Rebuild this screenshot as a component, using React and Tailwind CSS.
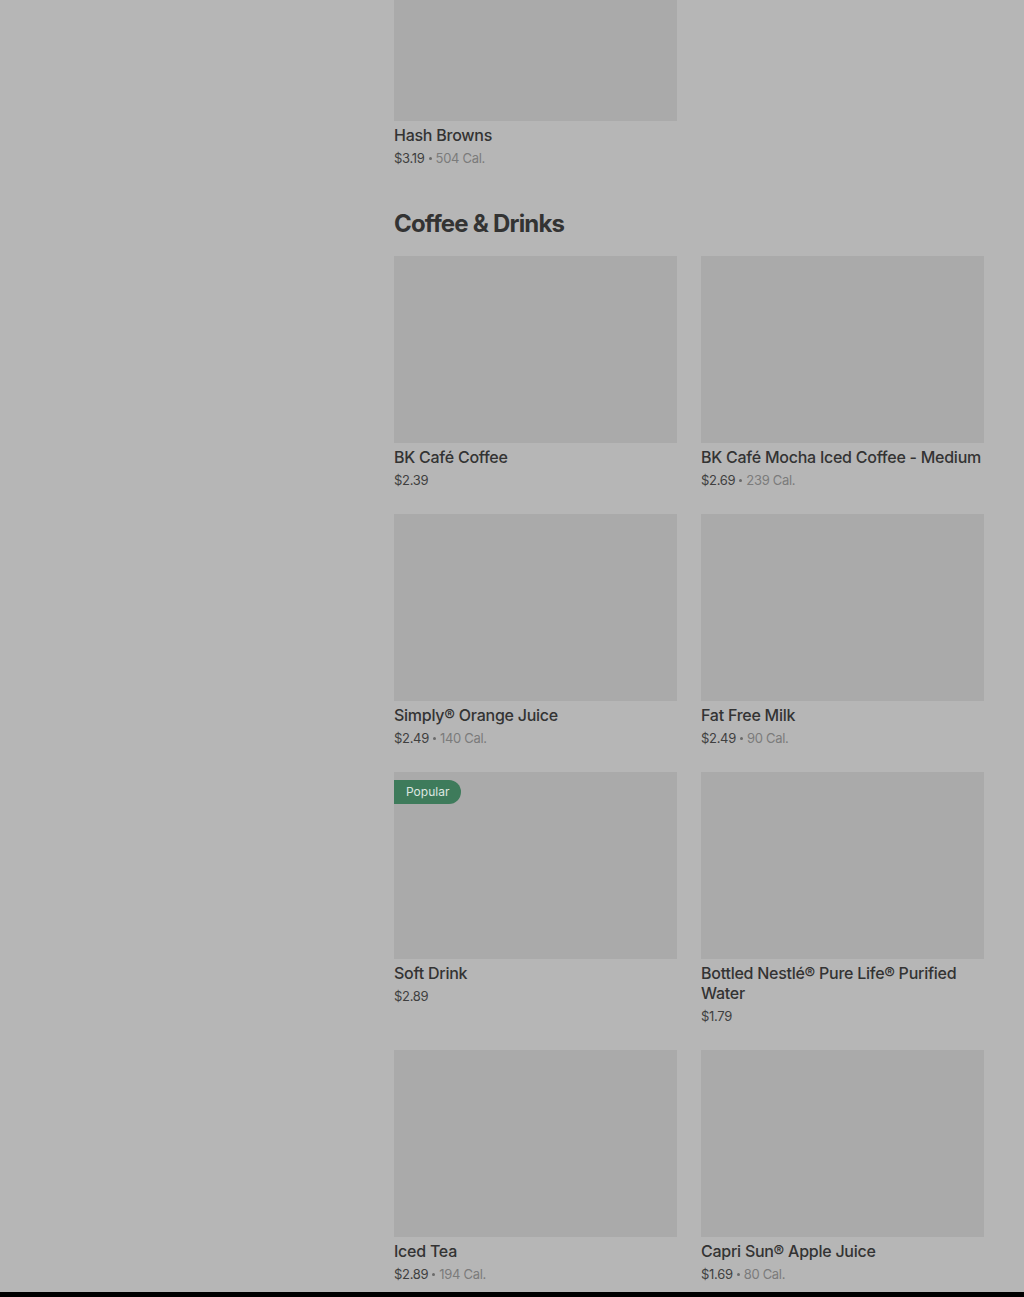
const items = [
  { name: "BK Café Coffee", price: "$2.39" },
  { name: "BK Café Mocha Iced Coffee - Medium", price: "$2.69", cal: "239 Cal." },
  { name: "Simply® Orange Juice", price: "$2.49", cal: "140 Cal." },
  { name: "Fat Free Milk", price: "$2.49", cal: "90 Cal." },
  { name: "Soft Drink", price: "$2.89", popular: true },
  { name: "Bottled Nestlé® Pure Life® Purified Water", price: "$1.79" },
  { name: "Iced Tea", price: "$2.89", cal: "194 Cal." },
  { name: "Capri Sun® Apple Juice", price: "$1.69", cal: "80 Cal." },
];

function ItemText({ name, price, cal }) {
  return (
    <div className="mt-1">
      <div className="text-[16px] leading-5 font-medium tracking-[-0.25px] text-[#333333]">
        {name}
      </div>
      <div className="mt-[3px] h-5 flex items-center text-[13px] leading-5 tracking-[-0.3px] text-[#3f3f3f]">
        <span>{price}</span>
        {cal && (
          <>
            <span className="mx-[4px] w-[3px] h-[3px] rounded-full bg-[#6a6a6a]" />
            <span className="text-[#7b7b7b]">{cal}</span>
          </>
        )}
      </div>
    </div>
  );
}

function Card({ item }) {
  return (
    <div>
      <div className="relative h-[187px] bg-[#aaaaaa]">
        {item.popular && (
          <div className="absolute left-0 top-2 h-6 px-3 flex items-center rounded-r-full bg-[#3e7b5b] text-[12px] text-[#dde6e0]">
            Popular
          </div>
        )}
      </div>
      <ItemText {...item} />
    </div>
  );
}

export default function App() {
  return (
    <div
      className="h-[1297px] overflow-hidden bg-[#b6b6b6] flex flex-col"
      style={{ fontFamily: "Inter, 'Liberation Sans', sans-serif" }}
    >
      <div className="flex-1 min-h-0 flex">
        <div className="w-[394px] shrink-0" />
        <div className="w-[590px]">
          {/* previous section, scrolled */}
          <div className="grid grid-cols-2 gap-x-6">
            <div>
              <div className="h-[121px] bg-[#aaaaaa]" />
              <ItemText name="Hash Browns" price="$3.19" cal="504 Cal." />
            </div>
          </div>

          {/* Coffee & Drinks */}
          <h2 className="mt-[40px] mb-[16px] text-[24px] leading-8 font-bold tracking-[-0.8px] text-[#333333]">
            Coffee &amp; Drinks
          </h2>
          <div className="grid grid-cols-2 gap-x-6 gap-y-6">
            {items.map((item) => (
              <Card key={item.name} item={item} />
            ))}
          </div>
        </div>
      </div>
      <div className="h-[5px] shrink-0 bg-black" />
    </div>
  );
}
